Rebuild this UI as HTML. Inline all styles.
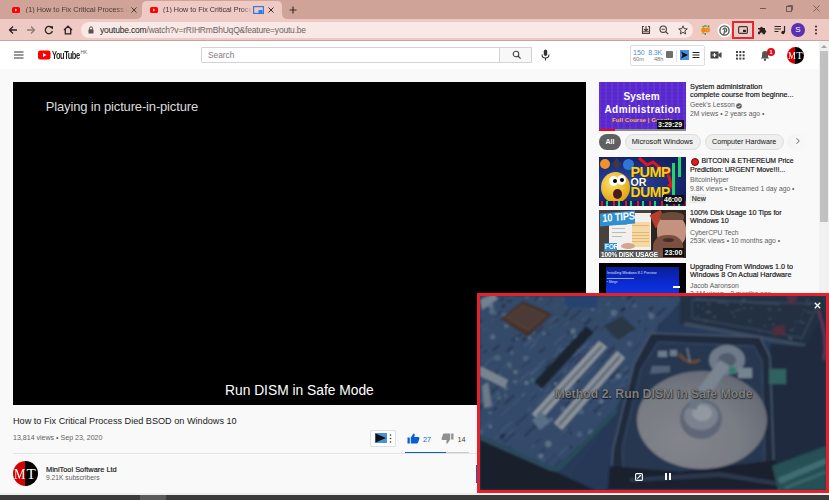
<!DOCTYPE html>
<html><head><meta charset="utf-8">
<style>
*{margin:0;padding:0;box-sizing:border-box}
html,body{width:829px;height:500px;overflow:hidden;background:#f9f9f9;font-family:"Liberation Sans",sans-serif;position:relative}
.a{position:absolute}
.t{position:absolute;white-space:nowrap;line-height:1}
</style></head><body>

<div class="a" style="left:0px;top:0px;width:829px;height:19px;background:#d0a398"></div>
<svg class="a" style="left:136px;top:0" width="152" height="20" viewBox="0 0 152 20"><path d="M0 19 Q6 19 6 13 L6 6 Q6 1 11 1 L141 1 Q146 1 146 6 L146 13 Q146 19 152 19 Z" fill="#efcac5"/></svg>
<svg class="a" style="left:12px;top:7px" width="8" height="6" viewBox="0 0 8 6"><rect x="0" y="0" width="8" height="6" rx="1.6" fill="#f00"/><path d="M3.2 1.6 L5.3 3 L3.2 4.4Z" fill="#fff"/></svg>
<svg class="a" style="left:150px;top:7px" width="8" height="6" viewBox="0 0 8 6"><rect x="0" y="0" width="8" height="6" rx="1.6" fill="#f00"/><path d="M3.2 1.6 L5.3 3 L3.2 4.4Z" fill="#fff"/></svg>
<div class="t " style="left:25.8px;top:6.12px;font-size:7.3px;color:#4a3936;width:102px;overflow:hidden;-webkit-mask-image:linear-gradient(90deg,#000 88%,transparent)">(1) How to Fix Critical Process Die</div>
<div class="t " style="left:163px;top:6.21px;font-size:7.2px;color:#3e3230;width:89px;overflow:hidden;-webkit-mask-image:linear-gradient(90deg,#000 88%,transparent)">(1) How to Fix Critical Process Died</div>
<svg class="a" style="left:131px;top:6.6px" width="6" height="6" viewBox="0 0 6 6"><path d="M0.5 0.5 L5.5 5.5 M5.5 0.5 L0.5 5.5" stroke="#4a3a38" stroke-width="1"/></svg>
<svg class="a" style="left:268.3px;top:6.6px" width="6" height="6" viewBox="0 0 6 6"><path d="M0.5 0.5 L5.5 5.5 M5.5 0.5 L0.5 5.5" stroke="#3a2e2c" stroke-width="1"/></svg>
<svg class="a" style="left:253px;top:6px" width="11" height="8" viewBox="0 0 11 8"><rect x="0.6" y="0.6" width="9.8" height="6.8" fill="none" stroke="#2f7de1" stroke-width="1.2"/><rect x="5.5" y="4" width="4" height="3" fill="#2f7de1"/></svg>
<svg class="a" style="left:289px;top:6px" width="8" height="8" viewBox="0 0 8 8"><path d="M4 0.5V7.5M0.5 4H7.5" stroke="#3e2f2d" stroke-width="1.2"/></svg>
<div class="a" style="left:760px;top:8px;width:6px;height:1px;background:#6e5d5a"></div>
<svg class="a" style="left:785px;top:4px" width="9" height="9" viewBox="0 0 9 9"><rect x="1.5" y="2.5" width="5" height="5" fill="none" stroke="#6e5d5a" stroke-width="1"/><path d="M3 2.5V1.5H7.5V6H6.5" fill="none" stroke="#6e5d5a" stroke-width="1"/></svg>
<svg class="a" style="left:812.5px;top:5.0px" width="7.0" height="7.0" viewBox="0 0 7.0 7.0"><path d="M0.5 0.5 L6.5 6.5 M6.5 0.5 L0.5 6.5" stroke="#6e5d5a" stroke-width="0.9"/></svg>
<div class="a" style="left:0px;top:19px;width:829px;height:21px;background:#efcac5"></div>
<div class="a" style="left:0px;top:40px;width:829px;height:1px;background:#c9a49f"></div>
<svg class="a" style="left:8px;top:25px" width="10" height="10" viewBox="0 0 10 10"><path d="M9 5H1.8M5 1.5L1.5 5L5 8.5" fill="none" stroke="#2b2221" stroke-width="1.3"/></svg>
<svg class="a" style="left:26px;top:25px" width="10" height="10" viewBox="0 0 10 10"><path d="M1 5H8.2M5 1.5L8.5 5L5 8.5" fill="none" stroke="#8c7c79" stroke-width="1.3"/></svg>
<svg class="a" style="left:44px;top:25px" width="10" height="10" viewBox="0 0 10 10"><path d="M8 3.2A3.6 3.6 0 1 0 8.4 6" fill="none" stroke="#2b2221" stroke-width="1.3"/><path d="M5.8 1.2L9 1.2L9 4.4Z" fill="#2b2221"/></svg>
<svg class="a" style="left:63px;top:25px" width="10" height="10" viewBox="0 0 10 10"><path d="M1 5L5 1.2L9 5M2.3 4V8.8H7.7V4" fill="none" stroke="#2b2221" stroke-width="1.3"/></svg>
<div class="a" style="left:81px;top:22px;width:612px;height:16px;background:#f8e8e6;border-radius:8px"></div>
<svg class="a" style="left:88px;top:26px" width="6" height="8" viewBox="0 0 6 8"><path d="M1.5 3.5V2.3A1.5 1.5 0 0 1 4.5 2.3V3.5" fill="none" stroke="#5c504e" stroke-width="1"/><rect x="0.5" y="3.3" width="5" height="4.2" rx="0.6" fill="#5c504e"/></svg>
<div class="t " style="left:100px;top:26.00px;font-size:8.5px;color:#6f6462;letter-spacing:-0.2px"><span style="color:#231c1b">youtube.com</span>/watch?v=rRIHRmBhUqQ&amp;feature=youtu.be</div>
<svg class="a" style="left:641px;top:25px" width="10" height="10" viewBox="0 0 10 10"><path d="M3 1.5H1.5V8.5H8.5V1.5H7M5 1V6M3 4L5 6L7 4" fill="none" stroke="#4a3f3d" stroke-width="1.1"/><path d="M1.5 6.8H8.5" stroke="#4a3f3d" stroke-width="1"/></svg>
<svg class="a" style="left:659px;top:25px" width="10" height="10" viewBox="0 0 10 10"><circle cx="4.2" cy="4.2" r="3.2" fill="none" stroke="#4a3f3d" stroke-width="1.1"/><path d="M6.5 6.5L9.2 9.2M2.6 4.2H5.8" stroke="#4a3f3d" stroke-width="1.1"/></svg>
<svg class="a" style="left:678px;top:25px" width="10" height="10" viewBox="0 0 10 10"><path d="M5 0.8L6.2 3.7L9.3 3.9L6.9 5.9L7.7 9L5 7.3L2.3 9L3.1 5.9L0.7 3.9L3.8 3.7Z" fill="none" stroke="#4a3f3d" stroke-width="1"/></svg>
<svg class="a" style="left:701px;top:25px" width="11" height="10" viewBox="0 0 11 10"><path d="M1.5 1L3 2.5M3.5 1H6.5M7 1.2L8.5 2.4M1.5 8.6L3 7.6M3.5 8.8H5" stroke="#4faa3c" stroke-width="1.2"/><circle cx="4" cy="0.9" r="0.7" fill="#1e6a3a"/><circle cx="7.6" cy="1.1" r="0.7" fill="#1e6a3a"/><circle cx="4.2" cy="9" r="0.7" fill="#1e6a3a"/></svg>
<span class="t" style="left:701.5px;top:26.2px;font-size:7.5px;font-weight:bold;color:#f5870f;letter-spacing:-0.3px;-webkit-text-stroke:0.9px #f5870f">so</span>
<svg class="a" style="left:716.7px;top:23.1px" width="15" height="15" viewBox="0 0 15 15"><circle cx="7.5" cy="7.5" r="7" fill="#fff"/><circle cx="7.5" cy="7.5" r="4.6" fill="none" stroke="#555" stroke-width="1.4"/><path d="M6.6 11.8L8 6.2M6.8 8.8A2 2 0 1 0 5.8 6.8" fill="none" stroke="#555" stroke-width="1.2"/></svg>
<div class="a" style="left:732px;top:20.5px;width:21.5px;height:18.5px;border:2px solid #e8262b"></div>
<div class="a" style="left:734px;top:22.5px;width:17.5px;height:14.5px;border:1px solid #e6d4d0"></div>
<svg class="a" style="left:737.5px;top:25.8px" width="10" height="8" viewBox="0 0 10 8"><rect x="0.6" y="0.6" width="8.8" height="6.8" rx="1.2" fill="none" stroke="#3a3a3a" stroke-width="1.2"/><rect x="5" y="3.8" width="3" height="2.2" fill="#2b2221"/></svg>
<svg class="a" style="left:757px;top:25px" width="10" height="10" viewBox="0 0 10 10"><path d="M1 3H3.3A1.2 1.2 0 1 1 5.7 3H8V5.3A1.2 1.2 0 1 1 8 7.7V9.2H5.5A1.2 1.2 0 1 0 3.3 9.2H1V6.6A1.2 1.2 0 1 0 1 4.4Z" fill="#2b2221"/></svg>
<svg class="a" style="left:774px;top:25px" width="12" height="10" viewBox="0 0 12 10"><path d="M0.5 1.5H7M0.5 4H7M0.5 6.5H4.5" stroke="#2b2221" stroke-width="1.2"/><path d="M10.5 1V7.3" stroke="#2b2221" stroke-width="1.2"/><circle cx="9" cy="7.5" r="1.7" fill="#2b2221"/></svg>
<div class="a" style="left:791px;top:23px;width:14px;height:14px;border-radius:50%;background:#5c2fb3;color:#fff;font-size:8px;line-height:14px;text-align:center">S</div>
<svg class="a" style="left:814px;top:25px" width="4" height="10" viewBox="0 0 4 10"><circle cx="2" cy="1.5" r="1" fill="#2b2221"/><circle cx="2" cy="5" r="1" fill="#2b2221"/><circle cx="2" cy="8.5" r="1" fill="#2b2221"/></svg>
<div class="a" style="left:0px;top:41px;width:829px;height:28px;background:#fff"></div>
<svg class="a" style="left:14px;top:51px" width="10" height="8" viewBox="0 0 10 8"><path d="M0 1H9.5M0 4H9.5M0 7H9.5" stroke="#333" stroke-width="1.1"/></svg>
<svg class="a" style="left:38px;top:50px" width="13" height="10" viewBox="0 0 13 10"><rect x="0" y="0.5" width="12.5" height="9" rx="2.3" fill="#f00"/><path d="M5 3L8.5 5L5 7Z" fill="#fff"/></svg>
<div class="t " style="left:52px;top:50.07px;font-size:11.5px;color:#212121;font-weight:bold;letter-spacing:-0.7px;transform:scaleX(0.65);transform-origin:0 0">YouTube</div>
<div class="t " style="left:80.5px;top:50.74px;font-size:4.8px;color:#606060">HK</div>
<div class="a" style="left:201px;top:47px;width:299px;height:16px;border:1px solid #d3d3d3;background:#fff;border-radius:1px"></div>
<div class="t " style="left:208px;top:51.37px;font-size:8.3px;color:#7d7d7d">Search</div>
<div class="a" style="left:499px;top:47px;width:33px;height:16px;border:1px solid #d3d3d3;background:#f8f8f8"></div>
<svg class="a" style="left:512px;top:50px" width="10" height="10" viewBox="0 0 10 10"><circle cx="4" cy="4" r="2.8" fill="none" stroke="#444" stroke-width="1.1"/><path d="M6 6L8.6 8.6" stroke="#444" stroke-width="1.3"/></svg>
<svg class="a" style="left:541px;top:49px" width="9" height="12" viewBox="0 0 9 12"><rect x="2.8" y="0.5" width="3.4" height="6.5" rx="1.7" fill="#333"/><path d="M1 5.5A3.5 3.5 0 0 0 8 5.5M4.5 9V11.5" fill="none" stroke="#333" stroke-width="1.1"/></svg>
<div class="a" style="left:630px;top:45px;width:75px;height:21px;border:1px solid #ddd;background:#fff;border-radius:2px"></div>
<div class="t " style="left:633px;top:49.27px;font-size:7px;color:#4d8fd6">150</div>
<div class="t " style="left:648.3px;top:49.27px;font-size:7px;color:#4d8fd6;letter-spacing:-0.2px">8.3K</div>
<div class="t " style="left:633px;top:57.26px;font-size:5.6px;color:#777">60m</div>
<div class="t " style="left:654px;top:57.26px;font-size:5.6px;color:#777">48h</div>
<div class="a" style="left:665.5px;top:51px;width:7px;height:7px;background:#6f6f6f;border-radius:1px"></div>
<div class="a" style="left:676px;top:50px;width:1px;height:12px;background:#ddd"></div>
<svg class="a" style="left:680px;top:50px" width="9" height="10" viewBox="0 0 9 10"><rect width="9" height="10" fill="#4a90e2"/><path d="M1 1.5L8 5L1 8.5L2.5 5Z" fill="#111"/></svg>
<svg class="a" style="left:692px;top:51px" width="8" height="8" viewBox="0 0 8 8"><path d="M0.5 1.5H7.5M0.5 4H7.5M0.5 6.5H7.5" stroke="#222" stroke-width="1.1"/></svg>
<svg class="a" style="left:710px;top:51px" width="12" height="8" viewBox="0 0 12 8"><rect x="0.5" y="0.5" width="8" height="7" fill="#444"/><path d="M8.5 3L11.5 1V7L8.5 5Z" fill="#444"/><path d="M4.5 2V6M2.5 4H6.5" stroke="#fff" stroke-width="1.2"/></svg>
<svg class="a" style="left:736px;top:51px" width="9" height="9" viewBox="0 0 9 9"><rect x="0.0" y="0.0" width="2" height="2" fill="#444"/><rect x="0.0" y="3.3" width="2" height="2" fill="#444"/><rect x="0.0" y="6.6" width="2" height="2" fill="#444"/><rect x="3.3" y="0.0" width="2" height="2" fill="#444"/><rect x="3.3" y="3.3" width="2" height="2" fill="#444"/><rect x="3.3" y="6.6" width="2" height="2" fill="#444"/><rect x="6.6" y="0.0" width="2" height="2" fill="#444"/><rect x="6.6" y="3.3" width="2" height="2" fill="#444"/><rect x="6.6" y="6.6" width="2" height="2" fill="#444"/></svg>
<svg class="a" style="left:760px;top:50px" width="10" height="11" viewBox="0 0 10 11"><path d="M5 1A3 3 0 0 0 2 4V7L0.8 8.5H9.2L8 7V4A3 3 0 0 0 5 1Z" fill="#555"/><circle cx="5" cy="9.8" r="1.2" fill="#555"/></svg>
<div class="a" style="left:767px;top:47.5px;width:8px;height:8px;border-radius:50%;background:#d50f1b;color:#fff;font-size:5.5px;line-height:8px;text-align:center;font-weight:bold">1</div>
<div class="a" style="left:787px;top:47px;width:17px;height:17px;border-radius:50%;background:linear-gradient(90deg,#d40000 50%,#000 50%);overflow:hidden"><span class="t" style="left:0.5px;top:3.5px;font-family:'Liberation Serif',serif;font-size:10.5px;color:#fff;transform:scaleX(0.85);transform-origin:0 0">M</span><span class="t" style="left:9.2px;top:3.5px;font-family:'Liberation Serif',serif;font-size:10.5px;color:#fff">T</span></div>
<div class="a" style="left:13px;top:82px;width:573px;height:323px;background:#000"></div>
<div class="t " style="left:45.8px;top:100.00px;font-size:13px;color:#dcdcdc;letter-spacing:-0.16px">Playing in picture-in-picture</div>
<div class="t " style="left:225px;top:384.22px;font-size:13.8px;color:#fff">Run DISM in Safe Mode</div>
<div class="t " style="left:13px;top:417.36px;font-size:9.14px;color:#1a1a1a">How to Fix Critical Process Died BSOD on Windows 10</div>
<div class="t " style="left:13px;top:434.13px;font-size:7.05px;color:#606060">13,814 views • Sep 23, 2020</div>
<div class="a" style="left:370px;top:430px;width:26px;height:17px;border:1px solid #e0e0e0;background:#fff;border-radius:2px"></div>
<svg class="a" style="left:375px;top:433px" width="12" height="10" viewBox="0 0 12 10"><rect width="12" height="10" fill="#4a90d9"/><path d="M0.5 0.5L11 5L0.5 9.5Z" fill="#111"/></svg>
<svg class="a" style="left:389px;top:434px" width="3" height="9" viewBox="0 0 3 9"><circle cx="1.5" cy="1" r="0.8" fill="#333"/><circle cx="1.5" cy="4.5" r="0.8" fill="#333"/><circle cx="1.5" cy="8" r="0.8" fill="#333"/></svg>
<svg class="a" style="left:407px;top:433px" width="13" height="11" viewBox="0 0 13 11"><rect x="0.5" y="4.5" width="2.3" height="6" fill="#065fd4"/><path d="M3.8 4.5L6.5 0.5C7.6 0.5 8 1.2 7.7 2.3L7.2 4H11.3C12.2 4 12.7 4.8 12.4 5.6L11 9.8C10.8 10.3 10.4 10.6 9.8 10.6H3.8Z" fill="#065fd4"/></svg>
<div class="t " style="left:423px;top:435.91px;font-size:7.2px;color:#065fd4">27</div>
<svg class="a" style="left:441px;top:433px" width="13" height="11" viewBox="0 0 13 11" style="transform:rotate(180deg)"><g transform="rotate(180 6.5 5.5)"><rect x="0.5" y="4.5" width="2.3" height="6" fill="#909090"/><path d="M3.8 4.5L6.5 0.5C7.6 0.5 8 1.2 7.7 2.3L7.2 4H11.3C12.2 4 12.7 4.8 12.4 5.6L11 9.8C10.8 10.3 10.4 10.6 9.8 10.6H3.8Z" fill="#909090"/></g></svg>
<div class="t " style="left:457.5px;top:435.91px;font-size:7.2px;color:#404040">14</div>
<div class="a" style="left:405px;top:451.5px;width:64px;height:2px;background:#ccc"></div>
<div class="a" style="left:405px;top:451.5px;width:41px;height:2px;background:#065fd4"></div>
<div class="a" style="left:13px;top:453px;width:464px;height:1px;background:#e5e5e5"></div>
<div class="a" style="left:13px;top:461px;width:25px;height:25px;border-radius:50%;background:linear-gradient(90deg,#d40000 50%,#000 50%);overflow:hidden"><span class="t" style="left:1px;top:5.5px;font-family:'Liberation Serif',serif;font-size:15px;color:#fff;transform:scaleX(0.85);transform-origin:0 0">M</span><span class="t" style="left:13.5px;top:5.5px;font-family:'Liberation Serif',serif;font-size:15px;color:#fff">T</span></div>
<div class="t " style="left:46px;top:466.14px;font-size:7.4px;color:#0f0f0f;-webkit-text-stroke:0.15px #0f0f0f">MiniTool Software Ltd</div>
<div class="t " style="left:46px;top:475.33px;font-size:6.7px;color:#606060">9.21K subscribers</div>
<div class="a" style="left:476px;top:465px;width:2px;height:18px;background:#065fd4"></div>
<div class="a" style="left:599px;top:82px;width:87px;height:48.5px;background:#5a29d2;overflow:hidden"><div class="a" style="left:0;top:0;width:87px;height:48px;background:repeating-linear-gradient(90deg,rgba(255,255,255,0.05) 0 2px,transparent 2px 6px),repeating-linear-gradient(0deg,rgba(0,0,0,0.06) 0 1px,transparent 1px 4px)"></div><span class="t" style="left:24.5px;top:9.5px;font-size:10px;font-weight:bold;color:#fff;letter-spacing:0.1px">System</span><span class="t" style="left:5.5px;top:22.5px;font-size:10px;font-weight:bold;color:#fff;letter-spacing:0.4px">Administration</span><span class="t" style="left:13px;top:35.2px;font-size:6.2px;font-weight:bold;color:#f7bb3a">Full Course | Google</span><div class="a" style="left:57.5px;top:38px;width:27px;height:8.5px;background:#0c0c0c"></div><span class="t" style="left:59px;top:39px;font-size:7px;font-weight:bold;color:#fff">3:29:29</span><div class="a" style="left:0;top:46.5px;width:87px;height:2px;background:#8a8a8a"></div><div class="a" style="left:0;top:46.5px;width:16px;height:2px;background:#f00"></div></div>
<div class="t " style="left:690px;top:82.68px;font-size:7.35px;color:#0f0f0f;-webkit-text-stroke:0.15px #0f0f0f">System administration</div>
<div class="t " style="left:690px;top:90.76px;font-size:7.25px;color:#0f0f0f;-webkit-text-stroke:0.15px #0f0f0f">complete course from beginne...</div>
<div class="t " style="left:690px;top:102.34px;font-size:6.8px;color:#606060">Geek&#39;s Lesson</div>
<svg class="a" style="left:736px;top:102.5px" width="6" height="6" viewBox="0 0 6 6"><circle cx="3" cy="3" r="2.8" fill="#606060"/><path d="M1.6 3L2.6 4L4.4 2" fill="none" stroke="#fff" stroke-width="0.8"/></svg>
<div class="t " style="left:690px;top:111.34px;font-size:6.8px;color:#606060">2M views • 2 years ago •</div>
<div class="a" style="left:599px;top:133.5px;width:21.5px;height:16px;border-radius:8px;background:#606060"></div>
<div class="t " style="left:605.5px;top:138.27px;font-size:7px;color:#fff;font-weight:bold">All</div>
<div class="a" style="left:624.5px;top:133.5px;width:76px;height:16px;border-radius:8px;background:#efefef;border:1px solid #dedede"></div>
<div class="t " style="left:631.7px;top:138.02px;font-size:7.3px;color:#0f0f0f">Microsoft Windows</div>
<div class="a" style="left:705px;top:133.5px;width:78.5px;height:16px;border-radius:8px;background:#efefef;border:1px solid #dedede"></div>
<div class="t " style="left:712px;top:138.65px;font-size:7.15px;color:#0f0f0f">Computer Hardware</div>
<div class="a" style="left:787px;top:133.5px;width:20px;height:16px;border-radius:8px 0 0 8px;background:linear-gradient(90deg,#f3f3f3,#f9f9f9)"></div>
<svg class="a" style="left:795px;top:137px" width="6" height="8" viewBox="0 0 6 8"><path d="M1.5 1.2L4.3 4L1.5 6.8" fill="none" stroke="#555" stroke-width="0.9"/></svg>
<div class="a" style="left:599px;top:157px;width:87px;height:49px;background:radial-gradient(ellipse at 30% 50%,#2845a8,#13205e 80%);overflow:hidden"><div class="a" style="left:1px;top:1.5px;width:10px;height:10px;border-radius:50%;background:#f2922a"></div><div class="a" style="left:13px;top:1px;width:9px;height:12px;background:#3a3a48;clip-path:polygon(50% 0,100% 50%,50% 100%,0 50%)"></div><div class="a" style="left:24px;top:1.5px;width:11px;height:11px;border-radius:50%;background:#2f76d6"></div><div class="a" style="left:2px;top:15px;width:29px;height:31px;border-radius:50%;background:radial-gradient(circle at 40% 35%,#ffe36a,#e1a313 75%)"></div><div class="a" style="left:10px;top:19px;width:9px;height:10px;border-radius:50%;background:#fff"></div><div class="a" style="left:18px;top:18px;width:9px;height:10px;border-radius:50%;background:#fff"></div><div class="a" style="left:14px;top:22px;width:4px;height:4px;border-radius:50%;background:#000"></div><div class="a" style="left:21px;top:21px;width:4px;height:4px;border-radius:50%;background:#000"></div><div class="a" style="left:14px;top:32px;width:9px;height:10px;border-radius:50%;background:#4a1a22"></div><svg class="a" style="left:38px;top:0" width="40" height="36" viewBox="0 0 40 36"><path d="M2 1L10 8L16 5L24 12L30 14L35 30" fill="none" stroke="#e5141b" stroke-width="3"/><path d="M30 28L36 33L38 24Z" fill="#e5141b"/></svg><span class="t" style="left:31.5px;top:7.7px;font-size:14.5px;font-weight:bold;color:#f7cf22;letter-spacing:-0.6px;text-shadow:0.6px 0.6px 0 #4a3000">PUMP</span><span class="t" style="left:31.5px;top:20.3px;font-size:10.7px;font-weight:bold;color:#fff;text-shadow:0.5px 0.5px 0 #222">OR</span><span class="t" style="left:31.5px;top:29.4px;font-size:13.9px;font-weight:bold;color:#f7cf22;letter-spacing:-0.4px;text-shadow:0.6px 0.6px 0 #4a3000">DUMP</span><div class="a" style="left:73px;top:6px;width:3px;height:36px;background:#24d36a"></div><div class="a" style="left:79px;top:0;width:3px;height:20px;background:#24d36a"></div><div class="a" style="left:0;top:44px;width:87px;height:5px;background:repeating-linear-gradient(90deg,#13205e 0 2px,#e5141b 2px 4px,#13205e 4px 7px,#24d36a 7px 9px,#13205e 9px 12px)"></div><div class="a" style="left:63.5px;top:38px;width:21px;height:8.5px;background:#0c0c0c"></div><span class="t" style="left:65px;top:39px;font-size:7px;font-weight:bold;color:#fff">46:00</span></div>
<div class="a" style="left:690.5px;top:157.7px;width:8px;height:8px;border-radius:50%;background:#e31c1c;border:0.6px solid #5a1010"></div>
<div class="t " style="left:701.5px;top:158.20px;font-size:6.85px;color:#0f0f0f;-webkit-text-stroke:0.15px #0f0f0f">BITCOIN &amp; ETHEREUM Price</div>
<div class="t " style="left:690px;top:165.87px;font-size:7.0px;color:#0f0f0f;-webkit-text-stroke:0.15px #0f0f0f">Prediction: URGENT Move!!!...</div>
<div class="t " style="left:690px;top:177.24px;font-size:6.8px;color:#606060">BitcoinHyper</div>
<div class="t " style="left:690px;top:185.84px;font-size:6.8px;color:#606060">9.8K views • Streamed 1 day ago •</div>
<div class="a" style="left:689.5px;top:193.5px;width:16px;height:9px;background:#ececec;border-radius:1px"></div>
<div class="t " style="left:691.8px;top:194.87px;font-size:7px;color:#3a3a3a;-webkit-text-stroke:0.2px #3a3a3a">New</div>
<div class="a" style="left:599px;top:210px;width:87px;height:48px;background:#4a403c;overflow:hidden"><div class="a" style="left:10px;top:3px;width:42px;height:37px;background:#f1f0ee"></div><div class="a" style="left:32.5px;top:12px;width:18.5px;height:25px;background:#f4d9a4"></div><div class="a" style="left:33px;top:13px;width:17px;height:24px;background:repeating-linear-gradient(180deg,transparent 0 2.5px,rgba(210,150,60,0.5) 2.5px 3.2px)"></div><div class="a" style="left:13px;top:14px;width:15px;height:0.8px;background:#aaa"></div><div class="a" style="left:13px;top:18px;width:13px;height:0.8px;background:#bbb"></div><div class="a" style="left:13px;top:22px;width:14px;height:0.8px;background:#bbb"></div><div class="a" style="left:13px;top:26px;width:10px;height:0.8px;background:#bbb"></div><div class="a" style="left:22px;top:33px;width:14px;height:6px;border-radius:50%;background:#d6a58e"></div><div class="a" style="left:52px;top:0;width:35px;height:48px;background:#2e2422"></div><div class="a" style="left:53px;top:2px;width:12px;height:14px;background:#b3402c;transform:rotate(-25deg)"></div><div class="a" style="left:58px;top:5px;width:29px;height:32px;border-radius:45% 45% 42% 42%;background:#c4927e"></div><div class="a" style="left:61px;top:2px;width:24px;height:8px;border-radius:50% 50% 20% 20%;background:#6a4a38"></div><div class="a" style="left:54px;top:25px;width:30px;height:25px;border-radius:45% 45% 10% 10%;background:#7a5040"></div><div class="a" style="left:64px;top:28px;width:11px;height:4px;border-radius:50%;background:#4a2c24"></div><div class="a" style="left:1px;top:2px;width:35px;height:12.5px;background:#2f8fd0;transform:skewY(-5deg)"></div><span class="t" style="left:2.5px;top:2.5px;font-size:11px;font-weight:bold;color:#fff;letter-spacing:-0.2px;transform:scaleX(0.85) rotate(-4deg);transform-origin:0 0">10 TIPS</span><div class="a" style="left:5px;top:33px;width:13px;height:7.5px;background:#2f8fd0"></div><span class="t" style="left:5.5px;top:33.3px;font-size:7.5px;font-weight:bold;color:#fff;transform:scaleX(0.85);transform-origin:0 0">FOR</span><div class="a" style="left:1px;top:40.5px;width:59px;height:7.5px;background:#5c5c5c"></div><span class="t" style="left:2px;top:40.5px;font-size:8px;font-weight:bold;color:#fff;letter-spacing:-0.2px;transform:scaleX(0.82);transform-origin:0 0">100% DISK USAGE</span><div class="a" style="left:64px;top:38px;width:21px;height:8.5px;background:#0c0c0c"></div><span class="t" style="left:65.5px;top:39px;font-size:7px;font-weight:bold;color:#fff">23:00</span></div>
<div class="t " style="left:690px;top:210.37px;font-size:7.12px;color:#0f0f0f;-webkit-text-stroke:0.15px #0f0f0f">100% Disk Usage 10 Tips for</div>
<div class="t " style="left:690px;top:218.17px;font-size:7.12px;color:#0f0f0f;-webkit-text-stroke:0.15px #0f0f0f">Windows 10</div>
<div class="t " style="left:690px;top:229.64px;font-size:6.8px;color:#606060">CyberCPU Tech</div>
<div class="t " style="left:690px;top:238.34px;font-size:6.8px;color:#606060">253K views • 10 months ago •</div>
<div class="a" style="left:599px;top:263px;width:87px;height:32px;background:#000;overflow:hidden"><div class="a" style="left:7px;top:4px;width:73px;height:30px;background:linear-gradient(180deg,#0a1d9a,#0a2cd6 60%,#0b3ae6)"></div><span class="t" style="left:8px;top:8.5px;font-size:3.6px;color:#dfe4ff">Installing Windows 8.1 Preview</span><div class="a" style="left:8px;top:15px;width:27px;height:0.8px;background:#8da0ff"></div><span class="t" style="left:8px;top:18px;font-size:3px;color:#dfe4ff">&#8226; Merge</span><div class="a" style="left:74px;top:23px;width:7px;height:1.6px;background:#fff"></div></div>
<div class="t " style="left:690px;top:262.81px;font-size:7.2px;color:#0f0f0f;-webkit-text-stroke:0.15px #0f0f0f">Upgrading From Windows 1.0 to</div>
<div class="t " style="left:690px;top:270.61px;font-size:7.2px;color:#0f0f0f;-webkit-text-stroke:0.15px #0f0f0f">Windows 8 On Actual Hardware</div>
<div class="t " style="left:690px;top:282.74px;font-size:6.8px;color:#606060">Jacob Aaronson</div>
<div class="t " style="left:690px;top:291.34px;font-size:6.8px;color:#606060">3.1M views • 8 months ago</div>
<div class="a" style="left:819px;top:41px;width:10px;height:454px;background:#f1f1f1"></div>
<svg class="a" style="left:820px;top:44px" width="8" height="5" viewBox="0 0 8 5"><path d="M1 4L4 1L7 4Z" fill="#a3a3a3"/></svg>
<div class="a" style="left:820px;top:51px;width:8px;height:171px;background:#c1c1c1"></div>
<div class="a" style="left:477px;top:293px;width:352px;height:200px;background:#e8202a"></div>
<div class="a" style="left:480px;top:296px;width:346px;height:194px;overflow:hidden"><svg width="346" height="194" viewBox="0 0 346 194">
<defs>
<filter id="bl" x="-5%" y="-5%" width="110%" height="110%"><feGaussianBlur stdDeviation="1.1"/></filter>
<radialGradient id="plat" cx="35%" cy="70%" r="75%"><stop offset="0" stop-color="#96989e"/><stop offset="0.6" stop-color="#8a8d94"/><stop offset="1" stop-color="#737884"/></radialGradient>
<linearGradient id="desk" x1="0" y1="1" x2="1" y2="0"><stop offset="0" stop-color="#161c2a"/><stop offset="0.5" stop-color="#2e4264"/><stop offset="1" stop-color="#36507a"/></linearGradient>
<linearGradient id="board" x1="0" y1="0" x2="1" y2="1"><stop offset="0" stop-color="#3a5276"/><stop offset="1" stop-color="#3b5478"/></linearGradient>
<pattern id="streak" width="9" height="7" patternUnits="userSpaceOnUse" patternTransform="rotate(-42)"><rect width="9" height="2" fill="#24344e" opacity="0.55"/><rect y="4" width="5" height="1.2" fill="#5a7496" opacity="0.5"/></pattern>
<clipPath id="bclip"><path d="M0 0 L205 0 L176 34 L152 80 L136 112 L80 168 Q76 172 70 170 L0 139Z"/></clipPath>
</defs>
<rect width="346" height="194" fill="#2c4062"/>
<path d="M0 142 L115 194 L0 194Z" fill="#1a202e" filter="url(#bl)"/>
<path d="M0 138 L90 180 L134 120 L160 90 L160 194 L120 194Z" fill="#2a3d5e" opacity="0.6"/>
<g filter="url(#bl)">
<!-- motherboard -->
<path d="M0 0 L205 0 L176 34 L152 80 L136 112 L80 168 Q76 172 70 170 L0 139Z" fill="url(#board)"/>
<path d="M0 139 L70 170 Q76 172 80 168 L136 112 L138 116 L82 173 Q76 177 68 174 L0 144Z" fill="#2f5364"/>
<g clip-path="url(#bclip)"><path d="M37.8 76.4l6.2 -5.7" stroke="#48648a" stroke-width="0.8" opacity="0.8"/><path d="M61.0 75.7l9.0 -8.2" stroke="#26385a" stroke-width="0.8" opacity="0.8"/><path d="M51.3 152.1l3.6 -3.2" stroke="#48648a" stroke-width="2.2" opacity="0.8"/><path d="M55.5 147.6l5.0 -4.5" stroke="#26385a" stroke-width="1.2" opacity="0.8"/><path d="M176.8 19.6l8.5 -7.7" stroke="#26385a" stroke-width="2.1" opacity="0.8"/><path d="M91.9 163.9l3.5 -3.1" stroke="#26385a" stroke-width="2.1" opacity="0.8"/><path d="M1.4 4.3l8.3 -7.5" stroke="#48648a" stroke-width="0.9" opacity="0.8"/><path d="M2.6 70.8l10.9 -9.9" stroke="#4f6a8e" stroke-width="1.8" opacity="0.8"/><path d="M199.5 167.7l5.9 -5.3" stroke="#26385a" stroke-width="1.7" opacity="0.8"/><path d="M100.2 84.2l5.7 -5.2" stroke="#48648a" stroke-width="2.0" opacity="0.8"/><path d="M196.8 79.6l3.9 -3.6" stroke="#22324c" stroke-width="1.2" opacity="0.8"/><path d="M63.8 172.0l4.1 -3.7" stroke="#26385a" stroke-width="1.3" opacity="0.8"/><path d="M151.4 55.6l10.1 -9.1" stroke="#22324c" stroke-width="0.9" opacity="0.8"/><path d="M89.4 67.1l11.1 -10.1" stroke="#26385a" stroke-width="1.3" opacity="0.8"/><path d="M144.8 85.4l8.6 -7.8" stroke="#26385a" stroke-width="1.9" opacity="0.8"/><path d="M151.0 7.3l3.3 -3.0" stroke="#22324c" stroke-width="1.9" opacity="0.8"/><path d="M3.0 35.1l3.5 -3.2" stroke="#4f6a8e" stroke-width="1.3" opacity="0.8"/><path d="M60.3 171.7l3.3 -3.0" stroke="#4f6a8e" stroke-width="2.1" opacity="0.8"/><path d="M52.5 129.9l8.2 -7.5" stroke="#22324c" stroke-width="0.8" opacity="0.8"/><path d="M39.1 85.5l11.5 -10.4" stroke="#48648a" stroke-width="1.9" opacity="0.8"/><path d="M181.8 146.7l4.1 -3.7" stroke="#48648a" stroke-width="1.1" opacity="0.8"/><path d="M158.5 132.9l10.3 -9.3" stroke="#26385a" stroke-width="1.7" opacity="0.8"/><path d="M58.8 57.5l6.2 -5.6" stroke="#22324c" stroke-width="1.5" opacity="0.8"/><path d="M72.3 28.8l6.6 -6.0" stroke="#22324c" stroke-width="1.5" opacity="0.8"/><path d="M104.4 28.9l6.7 -6.1" stroke="#22324c" stroke-width="2.2" opacity="0.8"/><path d="M45.6 15.1l3.8 -3.5" stroke="#48648a" stroke-width="2.2" opacity="0.8"/><path d="M194.1 31.2l4.1 -3.7" stroke="#48648a" stroke-width="1.7" opacity="0.8"/><path d="M131.6 134.6l10.5 -9.5" stroke="#22324c" stroke-width="1.9" opacity="0.8"/><path d="M51.7 50.3l5.3 -4.8" stroke="#4f6a8e" stroke-width="1.8" opacity="0.8"/><path d="M31.8 44.5l5.1 -4.7" stroke="#26385a" stroke-width="1.2" opacity="0.8"/><path d="M180.6 33.9l3.5 -3.2" stroke="#4f6a8e" stroke-width="2.2" opacity="0.8"/><path d="M96.5 41.6l10.1 -9.2" stroke="#48648a" stroke-width="2.2" opacity="0.8"/><path d="M11.5 85.5l10.2 -9.3" stroke="#48648a" stroke-width="2.1" opacity="0.8"/><path d="M-1.5 52.9l4.0 -3.6" stroke="#26385a" stroke-width="1.6" opacity="0.8"/><path d="M163.9 34.9l3.6 -3.3" stroke="#26385a" stroke-width="1.4" opacity="0.8"/><path d="M44.6 140.0l11.4 -10.3" stroke="#22324c" stroke-width="1.7" opacity="0.8"/><path d="M139.0 62.9l3.3 -3.0" stroke="#4f6a8e" stroke-width="1.0" opacity="0.8"/><path d="M32.8 45.9l8.3 -7.5" stroke="#26385a" stroke-width="1.9" opacity="0.8"/><path d="M162.0 73.6l6.3 -5.7" stroke="#4f6a8e" stroke-width="0.9" opacity="0.8"/><path d="M-3.4 89.2l7.3 -6.6" stroke="#48648a" stroke-width="0.9" opacity="0.8"/><path d="M73.0 99.0l8.6 -7.8" stroke="#22324c" stroke-width="1.7" opacity="0.8"/><path d="M73.5 48.8l11.7 -10.6" stroke="#4f6a8e" stroke-width="1.4" opacity="0.8"/><path d="M0.8 134.2l10.8 -9.8" stroke="#48648a" stroke-width="1.4" opacity="0.8"/><path d="M171.5 179.4l6.2 -5.6" stroke="#26385a" stroke-width="1.3" opacity="0.8"/><path d="M75.0 169.6l6.8 -6.2" stroke="#26385a" stroke-width="1.4" opacity="0.8"/><path d="M162.3 73.1l10.8 -9.8" stroke="#48648a" stroke-width="1.9" opacity="0.8"/><path d="M17.3 9.3l4.2 -3.8" stroke="#48648a" stroke-width="0.9" opacity="0.8"/><path d="M120.7 66.8l7.4 -6.7" stroke="#26385a" stroke-width="1.3" opacity="0.8"/><path d="M24.0 30.9l3.6 -3.2" stroke="#48648a" stroke-width="1.5" opacity="0.8"/><path d="M159.0 174.0l4.7 -4.3" stroke="#26385a" stroke-width="2.0" opacity="0.8"/><path d="M-0.9 164.3l5.8 -5.2" stroke="#48648a" stroke-width="0.9" opacity="0.8"/><path d="M139.6 123.9l10.9 -9.8" stroke="#26385a" stroke-width="1.7" opacity="0.8"/><path d="M119.1 35.3l7.2 -6.5" stroke="#26385a" stroke-width="0.9" opacity="0.8"/><path d="M187.1 28.2l6.1 -5.6" stroke="#26385a" stroke-width="1.1" opacity="0.8"/><path d="M142.2 161.5l3.3 -3.0" stroke="#22324c" stroke-width="1.7" opacity="0.8"/><path d="M58.1 70.2l7.0 -6.3" stroke="#4f6a8e" stroke-width="1.7" opacity="0.8"/><path d="M54.7 44.9l6.4 -5.8" stroke="#4f6a8e" stroke-width="1.4" opacity="0.8"/><path d="M82.1 4.2l8.5 -7.7" stroke="#48648a" stroke-width="1.5" opacity="0.8"/><path d="M83.8 111.3l10.2 -9.3" stroke="#26385a" stroke-width="1.9" opacity="0.8"/><path d="M74.1 12.1l6.1 -5.6" stroke="#4f6a8e" stroke-width="0.9" opacity="0.8"/><path d="M82.8 91.8l3.3 -3.0" stroke="#26385a" stroke-width="0.9" opacity="0.8"/><path d="M144.0 140.0l7.5 -6.8" stroke="#22324c" stroke-width="1.9" opacity="0.8"/><path d="M177.9 117.5l9.9 -9.0" stroke="#22324c" stroke-width="2.0" opacity="0.8"/><path d="M199.2 131.8l10.2 -9.2" stroke="#26385a" stroke-width="1.0" opacity="0.8"/><path d="M176.0 51.8l10.2 -9.2" stroke="#26385a" stroke-width="1.8" opacity="0.8"/><path d="M141.4 39.8l10.4 -9.4" stroke="#4f6a8e" stroke-width="1.0" opacity="0.8"/><path d="M178.3 49.5l10.2 -9.2" stroke="#26385a" stroke-width="1.2" opacity="0.8"/><path d="M192.5 86.4l8.2 -7.4" stroke="#26385a" stroke-width="1.2" opacity="0.8"/><path d="M-2.3 32.8l4.4 -4.0" stroke="#4f6a8e" stroke-width="1.8" opacity="0.8"/><path d="M178.0 30.4l9.9 -9.0" stroke="#22324c" stroke-width="1.9" opacity="0.8"/><path d="M0.2 154.5l11.5 -10.4" stroke="#48648a" stroke-width="1.6" opacity="0.8"/><path d="M111.8 158.9l3.9 -3.5" stroke="#48648a" stroke-width="1.8" opacity="0.8"/><path d="M68.0 67.6l6.2 -5.6" stroke="#26385a" stroke-width="1.3" opacity="0.8"/><path d="M150.6 79.6l4.5 -4.1" stroke="#22324c" stroke-width="1.2" opacity="0.8"/><path d="M98.4 55.8l11.5 -10.4" stroke="#4f6a8e" stroke-width="1.8" opacity="0.8"/><path d="M146.9 39.9l5.5 -5.0" stroke="#48648a" stroke-width="1.4" opacity="0.8"/><path d="M66.5 8.6l7.3 -6.6" stroke="#22324c" stroke-width="0.8" opacity="0.8"/><path d="M-9.5 63.9l3.9 -3.5" stroke="#4f6a8e" stroke-width="1.5" opacity="0.8"/><path d="M76.8 54.2l4.1 -3.8" stroke="#4f6a8e" stroke-width="1.7" opacity="0.8"/><path d="M89.7 24.3l11.3 -10.2" stroke="#26385a" stroke-width="1.8" opacity="0.8"/><path d="M84.7 11.5l4.2 -3.8" stroke="#4f6a8e" stroke-width="1.4" opacity="0.8"/><path d="M45.5 2.1l8.7 -7.9" stroke="#4f6a8e" stroke-width="1.6" opacity="0.8"/><path d="M111.5 108.3l7.6 -6.8" stroke="#48648a" stroke-width="1.1" opacity="0.8"/><path d="M179.7 7.9l7.7 -7.0" stroke="#48648a" stroke-width="1.1" opacity="0.8"/><path d="M23.4 164.1l3.9 -3.5" stroke="#26385a" stroke-width="1.0" opacity="0.8"/><path d="M31.9 109.5l7.5 -6.8" stroke="#48648a" stroke-width="1.9" opacity="0.8"/><path d="M26.7 55.7l5.6 -5.1" stroke="#22324c" stroke-width="2.2" opacity="0.8"/><path d="M142.1 86.0l7.7 -7.0" stroke="#48648a" stroke-width="2.0" opacity="0.8"/><path d="M146.5 83.7l9.5 -8.6" stroke="#48648a" stroke-width="1.0" opacity="0.8"/><path d="M199.3 47.1l8.7 -7.9" stroke="#22324c" stroke-width="1.3" opacity="0.8"/><path d="M147.4 125.1l10.5 -9.5" stroke="#22324c" stroke-width="1.2" opacity="0.8"/><path d="M106.3 78.5l10.0 -9.0" stroke="#4f6a8e" stroke-width="1.2" opacity="0.8"/><path d="M185.0 161.0l3.7 -3.4" stroke="#22324c" stroke-width="1.0" opacity="0.8"/><path d="M180.0 151.5l4.8 -4.3" stroke="#26385a" stroke-width="1.8" opacity="0.8"/><path d="M58.6 158.4l5.9 -5.3" stroke="#26385a" stroke-width="1.3" opacity="0.8"/><path d="M168.9 165.9l11.7 -10.6" stroke="#48648a" stroke-width="1.5" opacity="0.8"/><path d="M101.4 1.1l3.2 -2.9" stroke="#26385a" stroke-width="1.6" opacity="0.8"/><path d="M54.6 38.2l8.5 -7.7" stroke="#22324c" stroke-width="1.6" opacity="0.8"/><path d="M26.0 5.9l4.0 -3.6" stroke="#26385a" stroke-width="1.3" opacity="0.8"/><path d="M19.8 5.2l3.3 -3.0" stroke="#22324c" stroke-width="1.8" opacity="0.8"/><path d="M144.7 11.8l8.2 -7.4" stroke="#4f6a8e" stroke-width="1.1" opacity="0.8"/><path d="M190.5 96.1l8.9 -8.0" stroke="#48648a" stroke-width="0.9" opacity="0.8"/><path d="M33.2 20.2l3.3 -3.0" stroke="#22324c" stroke-width="2.0" opacity="0.8"/><path d="M122.6 51.7l3.8 -3.5" stroke="#22324c" stroke-width="1.9" opacity="0.8"/><path d="M125.7 53.0l5.9 -5.4" stroke="#4f6a8e" stroke-width="0.8" opacity="0.8"/><path d="M43.9 50.9l9.3 -8.4" stroke="#4f6a8e" stroke-width="2.1" opacity="0.8"/><path d="M151.5 108.4l7.2 -6.5" stroke="#4f6a8e" stroke-width="1.7" opacity="0.8"/><path d="M-3.5 74.3l6.8 -6.2" stroke="#22324c" stroke-width="1.3" opacity="0.8"/><path d="M138.0 96.8l4.9 -4.4" stroke="#22324c" stroke-width="1.6" opacity="0.8"/><path d="M50.3 78.5l7.6 -6.9" stroke="#4f6a8e" stroke-width="1.9" opacity="0.8"/><path d="M195.4 0.8l7.3 -6.6" stroke="#48648a" stroke-width="1.8" opacity="0.8"/><path d="M163.3 174.1l8.2 -7.4" stroke="#4f6a8e" stroke-width="1.6" opacity="0.8"/><path d="M23.4 146.7l11.3 -10.2" stroke="#26385a" stroke-width="1.5" opacity="0.8"/><path d="M13.1 114.6l3.7 -3.3" stroke="#22324c" stroke-width="1.7" opacity="0.8"/><path d="M64.7 72.2l6.5 -5.9" stroke="#22324c" stroke-width="1.4" opacity="0.8"/><path d="M125.6 67.0l5.7 -5.1" stroke="#48648a" stroke-width="2.1" opacity="0.8"/><path d="M95.2 68.3l10.8 -9.8" stroke="#26385a" stroke-width="2.1" opacity="0.8"/><path d="M16.6 106.9l9.1 -8.2" stroke="#22324c" stroke-width="1.3" opacity="0.8"/><path d="M58.6 28.0l10.4 -9.5" stroke="#4f6a8e" stroke-width="1.0" opacity="0.8"/><path d="M82.1 139.2l8.1 -7.3" stroke="#26385a" stroke-width="1.3" opacity="0.8"/><path d="M125.0 125.4l7.5 -6.8" stroke="#4f6a8e" stroke-width="1.2" opacity="0.8"/><path d="M137.7 151.9l4.3 -3.9" stroke="#26385a" stroke-width="2.2" opacity="0.8"/><path d="M141.9 108.5l6.1 -5.5" stroke="#26385a" stroke-width="1.3" opacity="0.8"/><path d="M29.7 175.5l9.4 -8.5" stroke="#22324c" stroke-width="1.0" opacity="0.8"/><path d="M128.2 35.2l4.3 -3.9" stroke="#26385a" stroke-width="1.9" opacity="0.8"/><path d="M144.0 78.3l4.7 -4.3" stroke="#22324c" stroke-width="1.2" opacity="0.8"/><path d="M175.9 83.5l3.1 -2.8" stroke="#48648a" stroke-width="1.8" opacity="0.8"/><path d="M95.1 113.8l7.1 -6.4" stroke="#26385a" stroke-width="1.2" opacity="0.8"/><path d="M145.0 1.0l5.1 -4.6" stroke="#48648a" stroke-width="1.8" opacity="0.8"/><path d="M113.4 116.5l10.5 -9.5" stroke="#26385a" stroke-width="1.8" opacity="0.8"/><path d="M124.7 81.7l5.7 -5.2" stroke="#22324c" stroke-width="2.1" opacity="0.8"/><path d="M40.9 72.0l9.3 -8.4" stroke="#26385a" stroke-width="1.2" opacity="0.8"/><path d="M79.0 81.9l8.5 -7.7" stroke="#48648a" stroke-width="1.5" opacity="0.8"/><path d="M128.8 157.1l10.9 -9.9" stroke="#4f6a8e" stroke-width="1.9" opacity="0.8"/><path d="M71.6 88.2l11.6 -10.5" stroke="#22324c" stroke-width="1.2" opacity="0.8"/><path d="M35.8 128.9l11.4 -10.3" stroke="#26385a" stroke-width="1.5" opacity="0.8"/><path d="M11.2 103.4l7.8 -7.0" stroke="#48648a" stroke-width="1.5" opacity="0.8"/><path d="M124.2 149.2l7.6 -6.9" stroke="#48648a" stroke-width="1.8" opacity="0.8"/><path d="M86.0 178.3l4.6 -4.2" stroke="#22324c" stroke-width="1.8" opacity="0.8"/><path d="M118.9 114.8l5.2 -4.7" stroke="#48648a" stroke-width="1.4" opacity="0.8"/><path d="M-7.2 75.3l6.7 -6.1" stroke="#4f6a8e" stroke-width="1.6" opacity="0.8"/><path d="M12.9 54.6l6.5 -5.9" stroke="#26385a" stroke-width="2.2" opacity="0.8"/><path d="M191.8 83.2l4.4 -4.0" stroke="#22324c" stroke-width="1.9" opacity="0.8"/><path d="M123.2 84.4l8.0 -7.2" stroke="#26385a" stroke-width="1.9" opacity="0.8"/><path d="M20.7 119.9l10.3 -9.4" stroke="#48648a" stroke-width="1.5" opacity="0.8"/><path d="M51.8 98.7l4.1 -3.7" stroke="#48648a" stroke-width="1.3" opacity="0.8"/><path d="M168.6 48.1l6.3 -5.7" stroke="#4f6a8e" stroke-width="2.2" opacity="0.8"/><path d="M132.6 86.7l10.1 -9.2" stroke="#4f6a8e" stroke-width="1.3" opacity="0.8"/><path d="M127.4 57.7l7.3 -6.6" stroke="#22324c" stroke-width="1.7" opacity="0.8"/><path d="M66.1 167.2l10.5 -9.5" stroke="#22324c" stroke-width="0.9" opacity="0.8"/><path d="M108.6 58.4l11.3 -10.3" stroke="#4f6a8e" stroke-width="1.7" opacity="0.8"/><path d="M-6.9 2.1l11.4 -10.3" stroke="#4f6a8e" stroke-width="1.2" opacity="0.8"/><path d="M11.3 25.7l5.0 -4.6" stroke="#48648a" stroke-width="1.3" opacity="0.8"/><path d="M22.1 162.7l10.0 -9.0" stroke="#26385a" stroke-width="1.7" opacity="0.8"/><path d="M134.5 175.9l3.8 -3.4" stroke="#4f6a8e" stroke-width="1.1" opacity="0.8"/><path d="M135.5 95.5l9.5 -8.6" stroke="#48648a" stroke-width="1.7" opacity="0.8"/><path d="M14.6 21.3l6.7 -6.0" stroke="#26385a" stroke-width="1.5" opacity="0.8"/><path d="M107.0 87.2l11.0 -10.0" stroke="#48648a" stroke-width="1.1" opacity="0.8"/><path d="M24.6 107.9l9.5 -8.6" stroke="#26385a" stroke-width="2.0" opacity="0.8"/><path d="M88.3 101.3l8.9 -8.0" stroke="#48648a" stroke-width="1.3" opacity="0.8"/><path d="M78.0 172.9l3.6 -3.3" stroke="#4f6a8e" stroke-width="1.7" opacity="0.8"/><path d="M-4.0 109.7l9.0 -8.2" stroke="#4f6a8e" stroke-width="1.9" opacity="0.8"/><path d="M9.7 87.2l9.7 -8.8" stroke="#26385a" stroke-width="0.8" opacity="0.8"/><path d="M140.8 112.6l6.0 -5.4" stroke="#4f6a8e" stroke-width="1.3" opacity="0.8"/><path d="M153.5 99.7l11.1 -10.0" stroke="#4f6a8e" stroke-width="1.4" opacity="0.8"/><path d="M78.7 99.7l10.3 -9.3" stroke="#4f6a8e" stroke-width="1.3" opacity="0.8"/><path d="M93.7 60.1l11.7 -10.6" stroke="#4f6a8e" stroke-width="2.2" opacity="0.8"/><path d="M127.5 142.6l5.9 -5.3" stroke="#4f6a8e" stroke-width="1.8" opacity="0.8"/><path d="M16.8 175.1l3.7 -3.4" stroke="#22324c" stroke-width="1.4" opacity="0.8"/><path d="M106.4 73.1l8.1 -7.3" stroke="#48648a" stroke-width="1.2" opacity="0.8"/><path d="M-8.7 34.2l11.1 -10.1" stroke="#22324c" stroke-width="1.9" opacity="0.8"/><path d="M181.1 110.1l8.4 -7.6" stroke="#22324c" stroke-width="1.1" opacity="0.8"/><path d="M130.1 82.4l9.7 -8.8" stroke="#22324c" stroke-width="1.7" opacity="0.8"/><path d="M172.5 75.9l3.9 -3.5" stroke="#22324c" stroke-width="1.3" opacity="0.8"/><path d="M162.7 141.6l8.0 -7.2" stroke="#4f6a8e" stroke-width="2.0" opacity="0.8"/><path d="M28.8 6.2l3.1 -2.8" stroke="#22324c" stroke-width="1.5" opacity="0.8"/><path d="M99.7 148.5l9.8 -8.9" stroke="#48648a" stroke-width="1.6" opacity="0.8"/><path d="M182.9 80.4l3.1 -2.8" stroke="#48648a" stroke-width="1.6" opacity="0.8"/><path d="M198.6 118.7l4.3 -3.9" stroke="#48648a" stroke-width="1.6" opacity="0.8"/><path d="M7.4 85.0l10.9 -9.9" stroke="#22324c" stroke-width="1.4" opacity="0.8"/><path d="M-8.0 120.5l11.7 -10.6" stroke="#22324c" stroke-width="1.1" opacity="0.8"/><path d="M15.5 85.0l5.4 -4.9" stroke="#26385a" stroke-width="1.4" opacity="0.8"/><path d="M146.3 166.1l6.2 -5.6" stroke="#26385a" stroke-width="1.8" opacity="0.8"/><path d="M7.7 113.2l9.3 -8.4" stroke="#48648a" stroke-width="1.7" opacity="0.8"/><path d="M176.9 164.4l3.4 -3.1" stroke="#22324c" stroke-width="0.8" opacity="0.8"/><path d="M-6.9 117.1l10.2 -9.3" stroke="#22324c" stroke-width="1.3" opacity="0.8"/><path d="M55.6 108.0l11.5 -10.4" stroke="#48648a" stroke-width="1.7" opacity="0.8"/><path d="M56.4 170.8l9.4 -8.5" stroke="#48648a" stroke-width="1.7" opacity="0.8"/><path d="M20.4 143.5l6.2 -5.6" stroke="#26385a" stroke-width="1.7" opacity="0.8"/><path d="M77.8 69.4l9.9 -9.0" stroke="#4f6a8e" stroke-width="1.9" opacity="0.8"/><path d="M109.0 52.6l3.5 -3.2" stroke="#4f6a8e" stroke-width="2.0" opacity="0.8"/><path d="M142.4 2.8l4.3 -3.9" stroke="#4f6a8e" stroke-width="1.6" opacity="0.8"/><path d="M195.0 44.3l6.4 -5.8" stroke="#48648a" stroke-width="1.6" opacity="0.8"/><path d="M178.2 145.3l5.5 -5.0" stroke="#22324c" stroke-width="1.3" opacity="0.8"/><path d="M46.3 28.3l11.1 -10.1" stroke="#22324c" stroke-width="1.2" opacity="0.8"/><path d="M19.5 160.3l11.8 -10.7" stroke="#26385a" stroke-width="1.2" opacity="0.8"/><path d="M168.7 145.3l9.0 -8.2" stroke="#48648a" stroke-width="1.3" opacity="0.8"/><path d="M7.9 99.7l10.0 -9.1" stroke="#26385a" stroke-width="1.9" opacity="0.8"/><path d="M141.7 176.8l5.7 -5.2" stroke="#22324c" stroke-width="1.7" opacity="0.8"/><path d="M87.7 37.2l5.2 -4.7" stroke="#22324c" stroke-width="1.9" opacity="0.8"/><path d="M86.5 15.8l10.1 -9.2" stroke="#22324c" stroke-width="1.1" opacity="0.8"/><path d="M111.7 161.4l10.8 -9.8" stroke="#4f6a8e" stroke-width="1.5" opacity="0.8"/><path d="M113.8 34.0l4.7 -4.2" stroke="#26385a" stroke-width="1.9" opacity="0.8"/><path d="M50.9 104.0l6.1 -5.6" stroke="#26385a" stroke-width="1.1" opacity="0.8"/><path d="M183.7 88.8l10.7 -9.6" stroke="#4f6a8e" stroke-width="1.7" opacity="0.8"/><path d="M155.3 28.1l8.3 -7.5" stroke="#4f6a8e" stroke-width="1.2" opacity="0.8"/><path d="M117.5 16.9l4.8 -4.3" stroke="#48648a" stroke-width="1.6" opacity="0.8"/><path d="M34.9 166.6l5.4 -4.9" stroke="#22324c" stroke-width="2.1" opacity="0.8"/><path d="M151.1 147.4l11.5 -10.4" stroke="#4f6a8e" stroke-width="2.0" opacity="0.8"/><path d="M61.2 179.0l6.3 -5.7" stroke="#22324c" stroke-width="0.9" opacity="0.8"/><path d="M107.0 156.7l7.0 -6.4" stroke="#22324c" stroke-width="2.0" opacity="0.8"/><path d="M124.4 166.0l9.2 -8.4" stroke="#22324c" stroke-width="1.2" opacity="0.8"/><path d="M108.5 115.3l11.5 -10.4" stroke="#48648a" stroke-width="1.1" opacity="0.8"/><path d="M168.4 66.8l5.0 -4.6" stroke="#26385a" stroke-width="1.0" opacity="0.8"/><path d="M187.8 169.4l3.5 -3.2" stroke="#22324c" stroke-width="2.0" opacity="0.8"/><path d="M-0.1 141.5l9.3 -8.4" stroke="#48648a" stroke-width="0.9" opacity="0.8"/><path d="M20.4 135.9l11.3 -10.2" stroke="#4f6a8e" stroke-width="1.6" opacity="0.8"/><path d="M82.7 117.5l7.1 -6.5" stroke="#4f6a8e" stroke-width="1.2" opacity="0.8"/><path d="M16.1 86.6l4.5 -4.0" stroke="#26385a" stroke-width="1.9" opacity="0.8"/><path d="M182.0 160.6l7.1 -6.4" stroke="#26385a" stroke-width="1.9" opacity="0.8"/>
<rect x="56.7" y="25.6" width="2.3" height="2.1" fill="#2a3a4c" transform="rotate(-40 56.7 25.6)"/><circle cx="102.0" cy="154.6" r="1.6" fill="#6a8299"/><circle cx="12.2" cy="15.4" r="2.9" fill="#5f7890"/><rect x="102.0" y="10.5" width="2.2" height="1.4" fill="#4e6a84" transform="rotate(-40 102.0 10.5)"/><circle cx="25.2" cy="20.0" r="2.9" fill="#5f7890"/><circle cx="18.0" cy="97.1" r="1.6" fill="#527089"/><circle cx="11.0" cy="10.1" r="2.6" fill="#6a8299"/><path d="M136.0 79.2l6.2 -5.4" stroke="#5b7790" stroke-width="0.8"/><path d="M43.5 30.6l4.3 -3.7" stroke="#5b7790" stroke-width="0.8"/><circle cx="52.5" cy="84.2" r="2.2" fill="#527089"/><circle cx="171.5" cy="20.1" r="2.8" fill="#5f7890"/><rect x="168.4" y="13.2" width="5.2" height="2.6" fill="#2a3a4c" transform="rotate(-40 168.4 13.2)"/><rect x="121.7" y="101.0" width="3.8" height="2.7" fill="#2a3a4c" transform="rotate(-40 121.7 101.0)"/><circle cx="83.0" cy="112.9" r="2.7" fill="#527089"/><circle cx="101.1" cy="115.8" r="2.7" fill="#527089"/><circle cx="60.7" cy="159.9" r="2.5" fill="#6a8299"/><circle cx="10.3" cy="130.6" r="1.8" fill="#6a8299"/><circle cx="29.1" cy="68.3" r="1.6" fill="#6a8299"/><path d="M72.7 61.0l10.2 -8.9" stroke="#5b7790" stroke-width="0.8"/><circle cx="26.4" cy="30.0" r="1.8" fill="#6a8299"/><circle cx="145.4" cy="31.0" r="1.7" fill="#527089"/><path d="M64.6 96.3l8.4 -7.3" stroke="#5b7790" stroke-width="0.8"/><rect x="90.2" y="105.0" width="2.2" height="2.8" fill="#4e6a84" transform="rotate(-40 90.2 105.0)"/><circle cx="139.6" cy="66.7" r="1.6" fill="#527089"/><path d="M70.1 32.4l6.7 -5.8" stroke="#5b7790" stroke-width="0.8"/><circle cx="19.2" cy="102.1" r="2.4" fill="#527089"/><circle cx="17.8" cy="61.8" r="3.0" fill="#527089"/><path d="M65.8 107.8l7.8 -6.8" stroke="#5b7790" stroke-width="0.8"/><rect x="83.0" y="19.6" width="5.9" height="2.0" fill="#2a3a4c" transform="rotate(-40 83.0 19.6)"/><circle cx="15.0" cy="17.4" r="1.9" fill="#527089"/><path d="M28.3 3.9l7.3 -6.3" stroke="#5b7790" stroke-width="0.8"/><circle cx="25.7" cy="92.3" r="2.4" fill="#527089"/><circle cx="45.7" cy="62.3" r="2.8" fill="#527089"/><rect x="94.8" y="85.5" width="4.5" height="2.6" fill="#223040" transform="rotate(-40 94.8 85.5)"/><rect x="129.5" y="38.5" width="3.4" height="1.1" fill="#223040" transform="rotate(-40 129.5 38.5)"/><circle cx="138.3" cy="80.3" r="2.5" fill="#6a8299"/><path d="M78.3 159.3l10.2 -8.8" stroke="#5b7790" stroke-width="0.8"/><circle cx="63.8" cy="37.5" r="1.8" fill="#5f7890"/><rect x="84.5" y="167.5" width="2.0" height="2.8" fill="#2a3a4c" transform="rotate(-40 84.5 167.5)"/><rect x="139.9" y="14.4" width="5.6" height="2.6" fill="#223040" transform="rotate(-40 139.9 14.4)"/><path d="M83.7 30.3l6.0 -5.2" stroke="#5b7790" stroke-width="0.8"/><path d="M69.3 68.2l8.6 -7.5" stroke="#5b7790" stroke-width="0.8"/><circle cx="29.8" cy="21.6" r="3.0" fill="#527089"/><path d="M25.6 140.5l8.2 -7.1" stroke="#5b7790" stroke-width="0.8"/><circle cx="61.3" cy="93.3" r="1.4" fill="#527089"/><path d="M113.7 89.5l6.7 -5.8" stroke="#5b7790" stroke-width="0.8"/><circle cx="36.9" cy="42.8" r="1.8" fill="#527089"/><path d="M57.0 92.5l4.2 -3.6" stroke="#5b7790" stroke-width="0.8"/><rect x="129.5" y="152.6" width="5.3" height="2.0" fill="#4e6a84" transform="rotate(-40 129.5 152.6)"/><rect x="22.9" y="25.8" width="5.5" height="2.6" fill="#4e6a84" transform="rotate(-40 22.9 25.8)"/><circle cx="0.7" cy="135.9" r="2.3" fill="#527089"/><rect x="21.1" y="10.5" width="4.1" height="2.0" fill="#223040" transform="rotate(-40 21.1 10.5)"/><circle cx="154.6" cy="9.7" r="1.5" fill="#5f7890"/><path d="M88.8 95.5l9.9 -8.6" stroke="#5b7790" stroke-width="0.8"/><rect x="77.6" y="104.1" width="4.0" height="2.4" fill="#2a3a4c" transform="rotate(-40 77.6 104.1)"/><rect x="88.9" y="137.3" width="3.0" height="2.0" fill="#2a3a4c" transform="rotate(-40 88.9 137.3)"/><circle cx="35.5" cy="76.1" r="2.1" fill="#6a8299"/><circle cx="12.7" cy="40.9" r="2.6" fill="#5f7890"/><rect x="157.0" y="26.3" width="4.6" height="1.3" fill="#223040" transform="rotate(-40 157.0 26.3)"/><path d="M85.3 168.3l4.8 -4.2" stroke="#5b7790" stroke-width="0.8"/><circle cx="75.5" cy="87.7" r="1.8" fill="#6a8299"/><circle cx="16.1" cy="62.2" r="2.2" fill="#527089"/><rect x="3.2" y="56.4" width="4.0" height="1.1" fill="#223040" transform="rotate(-40 3.2 56.4)"/><circle cx="170.0" cy="17.8" r="1.5" fill="#5f7890"/><circle cx="47.3" cy="22.0" r="3.0" fill="#6a8299"/><rect x="71.0" y="91.2" width="4.0" height="1.7" fill="#2a3a4c" transform="rotate(-40 71.0 91.2)"/><circle cx="10.1" cy="117.0" r="1.5" fill="#5f7890"/><circle cx="111.0" cy="136.3" r="2.9" fill="#5f7890"/><circle cx="46.3" cy="20.7" r="3.2" fill="#6a8299"/><circle cx="22.6" cy="89.6" r="1.6" fill="#5f7890"/><path d="M45.8 30.8l8.0 -6.9" stroke="#5b7790" stroke-width="0.8"/><circle cx="92.9" cy="35.0" r="2.6" fill="#6a8299"/><circle cx="60.7" cy="3.1" r="1.4" fill="#527089"/><rect x="88.5" y="166.3" width="3.0" height="1.9" fill="#4e6a84" transform="rotate(-40 88.5 166.3)"/><rect x="143.3" y="73.5" width="5.3" height="1.8" fill="#4e6a84" transform="rotate(-40 143.3 73.5)"/><circle cx="53.9" cy="36.6" r="1.8" fill="#527089"/><path d="M127.5 23.8l10.4 -9.0" stroke="#5b7790" stroke-width="0.8"/><rect x="146.5" y="2.4" width="5.5" height="1.9" fill="#223040" transform="rotate(-40 146.5 2.4)"/><path d="M14.8 143.0l8.3 -7.2" stroke="#5b7790" stroke-width="0.8"/><circle cx="49.3" cy="41.2" r="2.2" fill="#5f7890"/><circle cx="47.1" cy="0.6" r="2.0" fill="#527089"/><path d="M56.6 5.9l5.2 -4.5" stroke="#5b7790" stroke-width="0.8"/><circle cx="32.0" cy="57.0" r="1.9" fill="#527089"/><circle cx="35.2" cy="85.8" r="1.9" fill="#5f7890"/><circle cx="25.2" cy="99.8" r="1.9" fill="#527089"/><rect x="40.7" y="99.5" width="5.0" height="2.3" fill="#4e6a84" transform="rotate(-40 40.7 99.5)"/><path d="M137.2 101.4l8.6 -7.5" stroke="#5b7790" stroke-width="0.8"/><rect x="86.5" y="48.3" width="2.6" height="2.6" fill="#4e6a84" transform="rotate(-40 86.5 48.3)"/><circle cx="128.4" cy="138.1" r="2.3" fill="#527089"/><circle cx="99.5" cy="138.2" r="2.6" fill="#527089"/><circle cx="119.5" cy="117.9" r="1.5" fill="#5f7890"/><circle cx="111.5" cy="163.1" r="2.2" fill="#5f7890"/><rect x="109.9" y="106.5" width="4.0" height="1.0" fill="#223040" transform="rotate(-40 109.9 106.5)"/><rect x="130.9" y="85.5" width="4.6" height="1.1" fill="#4e6a84" transform="rotate(-40 130.9 85.5)"/><path d="M82.9 137.6l5.3 -4.6" stroke="#5b7790" stroke-width="0.8"/><rect x="132.4" y="39.2" width="3.8" height="2.7" fill="#223040" transform="rotate(-40 132.4 39.2)"/><path d="M83.8 116.2l7.9 -6.9" stroke="#5b7790" stroke-width="0.8"/><circle cx="112.5" cy="13.2" r="1.9" fill="#527089"/><circle cx="121.3" cy="105.6" r="2.3" fill="#6a8299"/><rect x="47.0" y="114.2" width="4.7" height="1.6" fill="#4e6a84" transform="rotate(-40 47.0 114.2)"/><path d="M50.0 79.2l10.5 -9.1" stroke="#5b7790" stroke-width="0.8"/><circle cx="96.1" cy="53.0" r="2.3" fill="#6a8299"/><path d="M80.3 139.4l6.8 -5.9" stroke="#5b7790" stroke-width="0.8"/><path d="M47.0 35.7l5.2 -4.5" stroke="#5b7790" stroke-width="0.8"/><rect x="101.8" y="24.1" width="5.8" height="1.3" fill="#4e6a84" transform="rotate(-40 101.8 24.1)"/><rect x="89.0" y="150.8" width="2.9" height="2.8" fill="#2a3a4c" transform="rotate(-40 89.0 150.8)"/><path d="M69.0 27.0l8.4 -7.2" stroke="#5b7790" stroke-width="0.8"/><circle cx="70.9" cy="123.6" r="2.1" fill="#5f7890"/><path d="M147.0 0.3l9.4 -8.2" stroke="#5b7790" stroke-width="0.8"/><circle cx="124.8" cy="153.3" r="2.1" fill="#6a8299"/><circle cx="68.3" cy="147.9" r="3.1" fill="#6a8299"/><circle cx="149.5" cy="47.7" r="2.6" fill="#527089"/><circle cx="46.5" cy="86.9" r="2.1" fill="#6a8299"/><path d="M110.4 155.3l7.5 -6.5" stroke="#5b7790" stroke-width="0.8"/><rect x="125.9" y="8.4" width="3.8" height="2.5" fill="#4e6a84" transform="rotate(-40 125.9 8.4)"/><circle cx="29.9" cy="70.5" r="1.9" fill="#527089"/><rect x="114.8" y="51.1" width="3.6" height="1.3" fill="#223040" transform="rotate(-40 114.8 51.1)"/><path d="M13.2 85.1l7.5 -6.5" stroke="#5b7790" stroke-width="0.8"/><path d="M79.3 56.6l6.6 -5.8" stroke="#5b7790" stroke-width="0.8"/><circle cx="95.9" cy="41.5" r="2.4" fill="#6a8299"/><rect x="41.8" y="43.9" width="5.5" height="2.5" fill="#2a3a4c" transform="rotate(-40 41.8 43.9)"/><circle cx="67.0" cy="126.8" r="1.9" fill="#5f7890"/><circle cx="87.2" cy="97.6" r="2.6" fill="#527089"/><circle cx="110.2" cy="146.7" r="1.9" fill="#5f7890"/><circle cx="67.3" cy="109.8" r="2.0" fill="#5f7890"/><path d="M22.3 72.3l9.2 -8.0" stroke="#5b7790" stroke-width="0.8"/><path d="M81.9 76.3l5.3 -4.6" stroke="#5b7790" stroke-width="0.8"/><rect x="19.1" y="140.3" width="5.4" height="2.8" fill="#223040" transform="rotate(-40 19.1 140.3)"/><path d="M96.5 6.7l5.3 -4.6" stroke="#5b7790" stroke-width="0.8"/><circle cx="53.2" cy="21.8" r="2.5" fill="#527089"/><circle cx="133.7" cy="16.9" r="3.1" fill="#5f7890"/><rect x="67.9" y="38.0" width="2.0" height="1.6" fill="#2a3a4c" transform="rotate(-40 67.9 38.0)"/><path d="M48.8 53.8l5.4 -4.7" stroke="#5b7790" stroke-width="0.8"/><circle cx="92.1" cy="93.0" r="2.1" fill="#527089"/><rect x="53.8" y="3.7" width="4.7" height="1.8" fill="#2a3a4c" transform="rotate(-40 53.8 3.7)"/></g>
<!-- heatsink -->
<path d="M20 23 L43 5 L73 18 L48 41Z" fill="#4a362f"/>
<path d="M24 22 L43 8 L68 19 L48 36Z" fill="#5a4439"/>
<path d="M30 21 L44 12 L62 20 L48 31Z" fill="#54403a"/>
<!-- light slots -->
<path d="M0 4 L14 -3 L18 3 L2 14Z" fill="#8593a2"/>
<path d="M0 70 L28 84 L25 92 L0 80Z" fill="#8b97a4"/>
<path d="M2 90 L8 86 L12 110 L4 112Z" fill="#7c8b9b"/>
<!-- blue chip top -->
<path d="M84 0 L118 0 L116 12 L86 11Z" fill="#2c4b7e"/>
<!-- black slot -->
<path d="M54 86 L106 30 L114 36 L62 93Z" fill="#1f2733"/>
<!-- PCI slots -->
<path d="M52 118 L119 45 L127 51 L60 125Z" fill="#a3aab2"/>
<path d="M56 119 L121 49 L123 51 L58 121Z" fill="#6f7b88"/>
<path d="M74 127 L137 55 L145 62 L82 134Z" fill="#a0a7af"/>
<path d="M78 128 L139 59 L141 61 L80 130Z" fill="#6c7886"/>
<!-- chips -->
<path d="M124 30 L142 20 L156 33 L138 44Z" fill="#2d3c4e"/>
<path d="M52 124 L62 116 L70 126 L60 134Z" fill="#657f98"/>
<!-- top-right PCB -->
<path d="M200 0 L346 0 L346 12 L325 50 L200 27Z" fill="#27344a"/><path d="M212 4 L338 8 L322 42 L212 22Z" fill="none" stroke="#3c4e66" stroke-width="1.5"/>
<path d="M205 26 L325 48 L328 52 L204 30Z" fill="#43556c"/>
<path d="M215 3 L300 8" stroke="#3e5068" stroke-width="2"/>
<rect x="320.7" y="18.3" width="1.6" height="1.1" fill="#46586c"/><rect x="326.5" y="15.5" width="2.1" height="1.1" fill="#46586c"/><rect x="250.8" y="15.9" width="3.3" height="1.2" fill="#46586c"/><rect x="259.9" y="7.7" width="2.5" height="1.2" fill="#46586c"/><rect x="237.6" y="5.9" width="2.6" height="1.5" fill="#46586c"/><rect x="224.2" y="24.1" width="3.1" height="1.8" fill="#46586c"/><rect x="320.7" y="26.2" width="3.6" height="1.1" fill="#46586c"/><rect x="259.0" y="12.8" width="2.1" height="1.2" fill="#46586c"/><rect x="253.8" y="19.7" width="1.9" height="1.8" fill="#46586c"/><rect x="327.3" y="7.5" width="3.1" height="1.4" fill="#46586c"/><rect x="268.5" y="24.0" width="2.6" height="1.8" fill="#46586c"/><rect x="323.0" y="13.9" width="2.4" height="1.0" fill="#46586c"/><rect x="256.1" y="13.5" width="2.0" height="1.8" fill="#46586c"/><rect x="270.2" y="11.4" width="1.9" height="1.6" fill="#46586c"/><rect x="308.6" y="41.0" width="3.3" height="1.8" fill="#46586c"/><rect x="226.9" y="7.2" width="3.2" height="1.6" fill="#46586c"/><rect x="229.0" y="14.9" width="1.5" height="1.7" fill="#46586c"/><rect x="319.5" y="24.3" width="2.4" height="1.3" fill="#46586c"/><rect x="216.3" y="19.4" width="3.4" height="1.1" fill="#46586c"/><rect x="288.2" y="12.2" width="2.9" height="2.0" fill="#46586c"/><rect x="326.1" y="4.2" width="2.4" height="1.2" fill="#46586c"/><rect x="308.8" y="42.1" width="3.4" height="1.9" fill="#46586c"/><rect x="241.4" y="5.8" width="3.3" height="1.4" fill="#46586c"/><rect x="221.8" y="12.0" width="1.7" height="1.6" fill="#46586c"/><rect x="226.0" y="15.0" width="2.9" height="2.0" fill="#46586c"/><rect x="297.3" y="12.8" width="3.6" height="1.6" fill="#46586c"/><rect x="263.0" y="11.7" width="2.6" height="1.4" fill="#46586c"/><rect x="216.7" y="9.1" width="2.2" height="1.5" fill="#46586c"/><rect x="278.2" y="35.3" width="1.8" height="1.1" fill="#46586c"/><rect x="315.6" y="25.4" width="2.1" height="1.2" fill="#46586c"/><rect x="288.6" y="21.8" width="2.5" height="1.9" fill="#46586c"/><rect x="291.7" y="27.9" width="3.0" height="1.0" fill="#46586c"/><rect x="326.3" y="3.3" width="2.4" height="1.4" fill="#46586c"/><rect x="309.8" y="33.2" width="3.6" height="1.6" fill="#46586c"/><rect x="328.2" y="15.4" width="2.5" height="1.6" fill="#46586c"/><rect x="245.6" y="7.6" width="3.2" height="1.4" fill="#46586c"/><rect x="313.8" y="30.8" width="1.5" height="1.1" fill="#46586c"/><rect x="228.4" y="15.6" width="2.0" height="1.7" fill="#46586c"/><rect x="233.2" y="19.9" width="2.5" height="2.0" fill="#46586c"/><rect x="261.7" y="3.1" width="4.0" height="2.0" fill="#46586c"/><rect x="282.9" y="29.3" width="3.5" height="1.0" fill="#46586c"/>
<path d="M307 0 L317 0 L316 8 L308 8Z" fill="#5a3450"/>
<path d="M293 31 L304 29 L305 38 L294 40Z" fill="#5b3040"/>
<!-- right dark -->
<path d="M290 48 L325 50 L346 12 L346 194 L300 194 L293 174Z" fill="#222f45"/>
<path d="M338 14 Q348 40 344 64" fill="none" stroke="#6c3a62" stroke-width="3"/>
<!-- HDD body -->
<path d="M171 37 L280 41 L290 61 L294 174 L300 194 L130 194 L133 153 L154 68Z" fill="#222e42"/>
<path d="M171 37 L280 41 L290 61 L294 174 L300 194 L130 194 L133 153 L154 68Z" fill="none" stroke="#52637a" stroke-width="1.5"/>
<path d="M178 46 L274 50 L282 65 L285 170 L278 184 L144 184 L142 152 L161 73Z" fill="#2c3c58"/><path d="M178 46 L274 50 L282 65 L285 170 L278 184 L144 184 L142 152 L161 73Z" fill="none" stroke="#465a76" stroke-width="1"/>
<path d="M130 170 L200 176 L296 164 L300 194 L128 194Z" fill="#1a2132"/>
<path d="M150 182 L240 176 L300 186 L300 190 L240 181 L150 186Z" fill="#3a4a62" opacity="0.7"/>
<!-- inner top components -->
<rect x="178" y="55" width="9" height="6" fill="#7d8da0"/>
<rect x="190" y="54" width="7" height="6" fill="#7d8da0"/>
<path d="M172 70 L190 70 L190 76 L170 78Z" fill="#5d6e84"/>
<path d="M199 58 Q208 70 220 64" fill="none" stroke="#7a5236" stroke-width="3"/>
<path d="M207 52 L210 66" stroke="#8a97a6" stroke-width="1.2"/>
<!-- platter -->
<ellipse cx="222" cy="124" rx="65" ry="49" fill="url(#plat)"/>
<ellipse cx="221" cy="123" rx="21" ry="20" fill="#6d7585"/>
<ellipse cx="221" cy="120" rx="17" ry="14" fill="#8c94a1"/>
<ellipse cx="222" cy="117" rx="10" ry="8" fill="#a7aeb8"/>
<!-- actuator -->
<ellipse cx="247" cy="64" rx="18" ry="15" fill="#7f8b9b"/>
<ellipse cx="247" cy="64" rx="9" ry="7" fill="#5b687a"/>
<path d="M214 98 L240 64 L250 70 L226 104Z" fill="#8d97a5"/>
<path d="M208 112 L216 96 L224 100 L216 114Z" fill="#7b8595"/>
<path d="M249 71 L256 71 L256 78 L249 78Z" fill="#3d8a7a"/>
<path d="M258 72 L272 72 L272 82 L258 82Z" fill="#8795a4"/>
<!-- green pcb right -->
<path d="M289 73 L306 73 L306 88 L289 88Z" fill="#34706a"/>
<path d="M292 170 L346 150 L346 194 L298 194Z" fill="#2b5a5e"/>
<path d="M298 182 L346 162 L346 168 L300 188Z" fill="#4a7c80"/>
<path d="M305 192 L346 176" stroke="#3f7275" stroke-width="3"/>
</g>
</svg><div class="a" style="left:0;top:0;width:346px;height:194px;background:rgba(12,18,30,0.14)"></div></div>
<div class="t " style="left:554.5px;top:387.99px;font-size:12.3px;color:#7f8082;font-weight:bold;text-shadow:0 0 1px rgba(20,20,20,0.9),0.5px 0.5px 1px rgba(0,0,0,0.6)">Method 2. Run DISM in Safe Mode</div>
<svg class="a" style="left:814px;top:302px" width="7" height="7" viewBox="0 0 7 7"><path d="M0.8 0.8L6.2 6.2M6.2 0.8L0.8 6.2" stroke="#fff" stroke-width="1.3"/></svg>
<svg class="a" style="left:634.5px;top:472.5px" width="8" height="8" viewBox="0 0 8 8"><rect x="0.6" y="0.6" width="6.8" height="6.8" rx="1" fill="none" stroke="#fff" stroke-width="1.1"/><path d="M2.3 5.7L5.8 2.2" stroke="#fff" stroke-width="1.1"/><path d="M4.2 1.9H6.1V3.8Z" fill="#fff"/></svg>
<div class="a" style="left:665px;top:472.5px;width:2px;height:7.5px;background:#fff"></div>
<div class="a" style="left:669px;top:472.5px;width:2px;height:7.5px;background:#fff"></div>
<div class="a" style="left:0px;top:493px;width:829px;height:2px;background:#eef0f0"></div>
<div class="a" style="left:0px;top:495px;width:829px;height:5px;background:#3b3b3b"></div>
<div class="a" style="left:140px;top:495px;width:26px;height:5px;background:#5a5a5a"></div>
</body></html>
